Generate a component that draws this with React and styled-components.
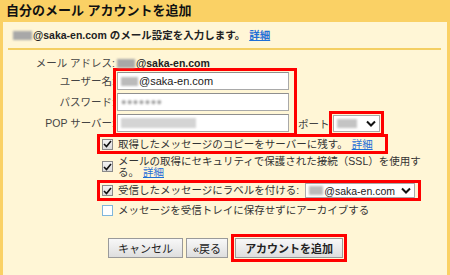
import React from 'react';
import styled, { createGlobalStyle } from 'styled-components';

const GlobalStyle = createGlobalStyle`
  body {
    margin: 0;
    background: #fff6d6;
    font-family: "Liberation Sans", Arial, "Noto Sans CJK JP", sans-serif;
    font-size: 10.5px;
    color: #333;
  }
`;

const Page = styled.div`
  width: 450px;
  height: 275px;
  display: flex;
  flex-direction: column;
  overflow: hidden;
`;

const Header = styled.div`
  height: 22px;
  line-height: 22px;
  background: #fad165;
  padding-left: 6px;
  font-size: 13px;
  font-weight: bold;
  color: #111;
`;

const Panel = styled.div`
  flex: 1;
  background: #fff6d6;
  border-left: 3px solid #fad165;
  border-right: 3px solid #fad165;
`;

const Intro = styled.div`
  height: 22px;
  padding: 4px 0 0 10px;
  box-sizing: border-box;
  line-height: 14px;
  font-weight: bold;
  color: #222;
  display: flex;
  align-items: center;
`;

const Divider = styled.div`
  height: 2px;
  background: #f4cf62;
  margin: 4px 6px 0 5px;
`;

const Form = styled.div`
  padding-top: 6px;
`;

const InfoRow = styled.div`
  display: flex;
  align-items: center;
  height: 14px;
`;

const Label = styled.div`
  width: 112px;
  margin-right: 2px;
  flex-shrink: 0;
  text-align: right;
  white-space: nowrap;
  height: ${(p) => p.$h || 14}px;
  line-height: ${(p) => p.$h || 14}px;
  color: #444;
`;

const Value = styled.span`
  display: inline-flex;
  align-items: center;
  font-weight: bold;
  color: #222;
`;

const Blur = styled.span`
  display: inline-block;
  width: ${(p) => p.$w}px;
  height: ${(p) => p.$h || 9}px;
  background: ${(p) => p.$c || '#a8a8a8'};
  filter: blur(1px);
  margin-right: 1px;
`;

const Fields = styled.div`
  display: flex;
  margin-top: 2px;
`;

const LabelCol = styled.div`
  display: flex;
  flex-direction: column;
  gap: 3px;
`;

const InputGroup = styled.div`
  display: flex;
  flex-direction: column;
  gap: 3px;
  padding-right: 4px;
  outline: 3px solid #f00;
  outline-offset: 1px;
`;

const TextInput = styled.div`
  width: 172px;
  height: 18px;
  box-sizing: border-box;
  border: 1px solid #a9a9a9;
  border-top-color: #8f8f8f;
  background: #fff;
  display: flex;
  align-items: center;
  padding-left: 3px;
  font-size: 11px;
  color: #222;
`;

const Dots = styled.span`
  color: #9a9a9a;
  font-size: 9px;
  letter-spacing: 0.5px;
  filter: blur(0.8px);
`;

const PortBlock = styled.div`
  display: flex;
  align-items: center;
  align-self: flex-end;
  height: 18px;
  margin-left: 5px;
  color: #444;
`;

const Select = styled.div`
  width: ${(p) => p.$w}px;
  height: ${(p) => p.$h || 16}px;
  box-sizing: border-box;
  border: 1px solid #a9a9a9;
  background: #fff;
  display: flex;
  align-items: center;
  justify-content: space-between;
  padding: 0 3px 0 3px;
  margin-left: 1px;
  font-size: 10.5px;
  color: #222;
  white-space: nowrap;
  flex-shrink: 0;
  outline: ${(p) => (p.$hl ? '3px solid #f00' : 'none')};
  outline-offset: 1px;
`;

const Checks = styled.div`
  display: flex;
  flex-direction: column;
  gap: 5px;
  margin: 5px 0 0 97px;
`;

const CheckRow = styled.div`
  display: flex;
  align-items: ${(p) => (p.$top ? 'flex-start' : 'center')};
  gap: 5px;
  width: ${(p) => (p.$w ? `${p.$w}px` : 'auto')};
  min-height: ${(p) => p.$h || 14}px;
  padding-left: 2px;
  box-sizing: border-box;
  outline: ${(p) => (p.$hl ? '3px solid #f00' : 'none')};
  color: #333;
  white-space: nowrap;
`;

const CheckText = styled.div`
  line-height: 11px;
`;

const Box = styled.span`
  width: 11px;
  height: 11px;
  flex-shrink: 0;
  box-sizing: border-box;
  margin-top: ${(p) => p.$mt || 0}px;
  border: 1px solid ${(p) => (p.$on ? '#8a8a8a' : '#7fb6dc')};
  background: ${(p) => (p.$on ? 'linear-gradient(#f4f4f4, #dcdcdc)' : '#fff')};
  display: flex;
  align-items: center;
  justify-content: center;
`;

const Link = styled.a`
  color: #1f6fd6;
  text-decoration: underline;
  margin-left: 4px;
`;

const Buttons = styled.div`
  display: flex;
  margin: 21px 0 0 105px;
`;

const Button = styled.button`
  height: 20px;
  padding: 0 ${(p) => p.$px || 9}px;
  margin-right: ${(p) => p.$mr || 0}px;
  border: 1px solid #9a9a9a;
  background: linear-gradient(#f8f8f8, #dedede);
  font-family: inherit;
  font-size: 11px;
  font-weight: ${(p) => (p.$primary ? 'bold' : 'normal')};
  color: #222;
  outline: ${(p) => (p.$primary ? '3px solid #f00' : 'none')};
  outline-offset: 1px;
`;

const Check = ({ on, mt }) => (
  <Box $on={on} $mt={mt}>
    {on && (
      <svg width="9" height="8" viewBox="0 0 9 8">
        <polyline points="1,4 3.5,6.5 8,1" fill="none" stroke="#111" strokeWidth="1.6" />
      </svg>
    )}
  </Box>
);

const Chevron = () => (
  <svg width="10" height="7" viewBox="0 0 10 7">
    <polyline points="1,1.5 5,5.5 9,1.5" fill="none" stroke="#111" strokeWidth="2" />
  </svg>
);

export default function App() {
  return (
    <Page>
      <GlobalStyle />
      <Header>自分のメール アカウントを追加</Header>
      <Panel>
        <Intro>
          <Blur $w={19} $h={9} />
          @saka-en.com のメール設定を入力します。
          <Link href="#">詳細</Link>
        </Intro>
        <Divider />
        <Form>
          <InfoRow>
            <Label>メール アドレス:</Label>
            <Value>
              <Blur $w={18} $h={9} />
              @saka-en.com
            </Value>
          </InfoRow>
          <Fields>
            <LabelCol>
              <Label $h={18}>ユーザー名:</Label>
              <Label $h={18}>パスワード:</Label>
              <Label $h={18}>POP サーバー:</Label>
            </LabelCol>
            <InputGroup>
              <TextInput>
                <Blur $w={17} $h={9} $c="#bbb" />
                @saka-en.com
              </TextInput>
              <TextInput>
                <Dots>●●●●●●●</Dots>
              </TextInput>
              <TextInput>
                <Blur $w={75} $h={10} $c="#d4d4d4" />
              </TextInput>
            </InputGroup>
            <PortBlock>
              ポート:
              <Select $w={47} $h={17} $hl>
                <Blur $w={20} $h={9} $c="#c4c4c4" />
                <Chevron />
              </Select>
            </PortBlock>
          </Fields>
          <Checks>
            <CheckRow $hl $w={285}>
              <Check on />
              <CheckText>
                取得したメッセージのコピーをサーバーに残す。<Link href="#">詳細</Link>
              </CheckText>
            </CheckRow>
            <CheckRow $top $h={22}>
              <Check on mt={5} />
              <CheckText>
                メールの取得にセキュリティで保護された接続（SSL）を使用す
                <br />
                る。<Link href="#">詳細</Link>
              </CheckText>
            </CheckRow>
            <CheckRow $hl $w={318} $h={15}>
              <Check on />
              <CheckText>受信したメッセージにラベルを付ける:</CheckText>
              <Select $w={110} $h={15}>
                <span>
                  <Blur $w={14} $h={9} $c="#bbb" />
                  @saka-en.com
                </span>
                <Chevron />
              </Select>
            </CheckRow>
            <CheckRow>
              <Check />
              <CheckText>メッセージを受信トレイに保存せずにアーカイブする</CheckText>
            </CheckRow>
          </Checks>
          <Buttons>
            <Button $mr={3}>キャンセル</Button>
            <Button $px={6} $mr={7}>«戻る</Button>
            <Button $primary>アカウントを追加</Button>
          </Buttons>
        </Form>
      </Panel>
    </Page>
  );
}
